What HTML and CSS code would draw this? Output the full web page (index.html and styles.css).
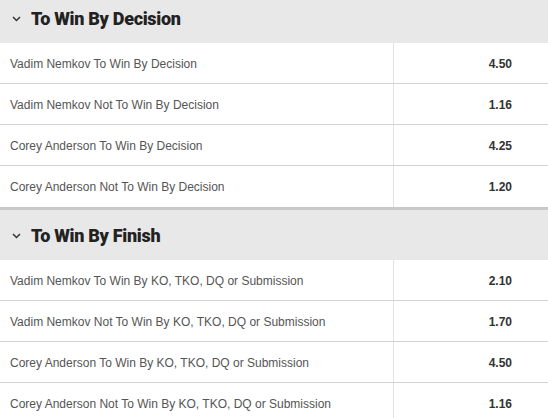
FILE: index.html
```html
<!DOCTYPE html>
<html>
<head>
<meta charset="utf-8">
<link rel="stylesheet" href="styles.css">
</head>
<body>
<div class="page">
  <section class="market first">
    <div class="market-head">
      <svg class="chev" width="9" height="6" viewBox="0 0 9 6"><path d="M1 1 L4.5 4.5 L8 1" fill="none" stroke="#333" stroke-width="1.5"/></svg>
      <span class="title">To Win By Decision</span>
    </div>
    <div class="row"><span class="label">Vadim Nemkov To Win By Decision</span><span class="odds">4.50</span></div>
    <div class="row"><span class="label">Vadim Nemkov Not To Win By Decision</span><span class="odds">1.16</span></div>
    <div class="row"><span class="label">Corey Anderson To Win By Decision</span><span class="odds">4.25</span></div>
    <div class="row"><span class="label">Corey Anderson Not To Win By Decision</span><span class="odds">1.20</span></div>
  </section>
  <section class="market">
    <div class="market-head">
      <svg class="chev" width="9" height="6" viewBox="0 0 9 6"><path d="M1 1 L4.5 4.5 L8 1" fill="none" stroke="#333" stroke-width="1.5"/></svg>
      <span class="title">To Win By Finish</span>
    </div>
    <div class="row"><span class="label">Vadim Nemkov To Win By KO, TKO, DQ or Submission</span><span class="odds">2.10</span></div>
    <div class="row"><span class="label">Vadim Nemkov Not To Win By KO, TKO, DQ or Submission</span><span class="odds">1.70</span></div>
    <div class="row"><span class="label">Corey Anderson To Win By KO, TKO, DQ or Submission</span><span class="odds">4.50</span></div>
    <div class="row"><span class="label">Corey Anderson Not To Win By KO, TKO, DQ or Submission</span><span class="odds">1.16</span></div>
  </section>
</div>
</body>
</html>
```
FILE: styles.css
```css
html, body {
  margin: 0;
  padding: 0;
  background: #fff;
  overflow: hidden;
}
.page {
  width: 548px;
  margin-top: -7px;
  font-family: "Liberation Sans", Arial, sans-serif;
}
.market {
  border-top: 3px solid #c9c9c9;
}
.market.first {
  border-top: none;
}
.market-head {
  height: 50px;
  background: #e8e8e8;
  display: flex;
  align-items: center;
  padding-left: 12px;
  box-sizing: border-box;
}
.chev {
  margin-right: 10px;
  margin-top: 2px;
}
.title {
  font-family: "Roboto", "Liberation Sans", sans-serif;
  font-weight: 900;
  font-size: 18px;
  color: #222;
  letter-spacing: -0.3px;
}
.row {
  display: grid;
  grid-template-columns: 394px 1fr;
  height: 41px;
  border-bottom: 1px solid #d2d2d2;
  box-sizing: border-box;
}
.market .row:last-child {
  border-bottom: none;
}
.label {
  display: flex;
  align-items: center;
  padding-left: 10px;
  padding-top: 1px;
  font-size: 12px;
  color: #555;
  border-right: 1px solid #e3e3e3;
}
.odds {
  display: flex;
  align-items: center;
  justify-content: flex-end;
  padding-right: 36px;
  padding-top: 1px;
  font-size: 12px;
  font-weight: bold;
  color: #333;
}
```
